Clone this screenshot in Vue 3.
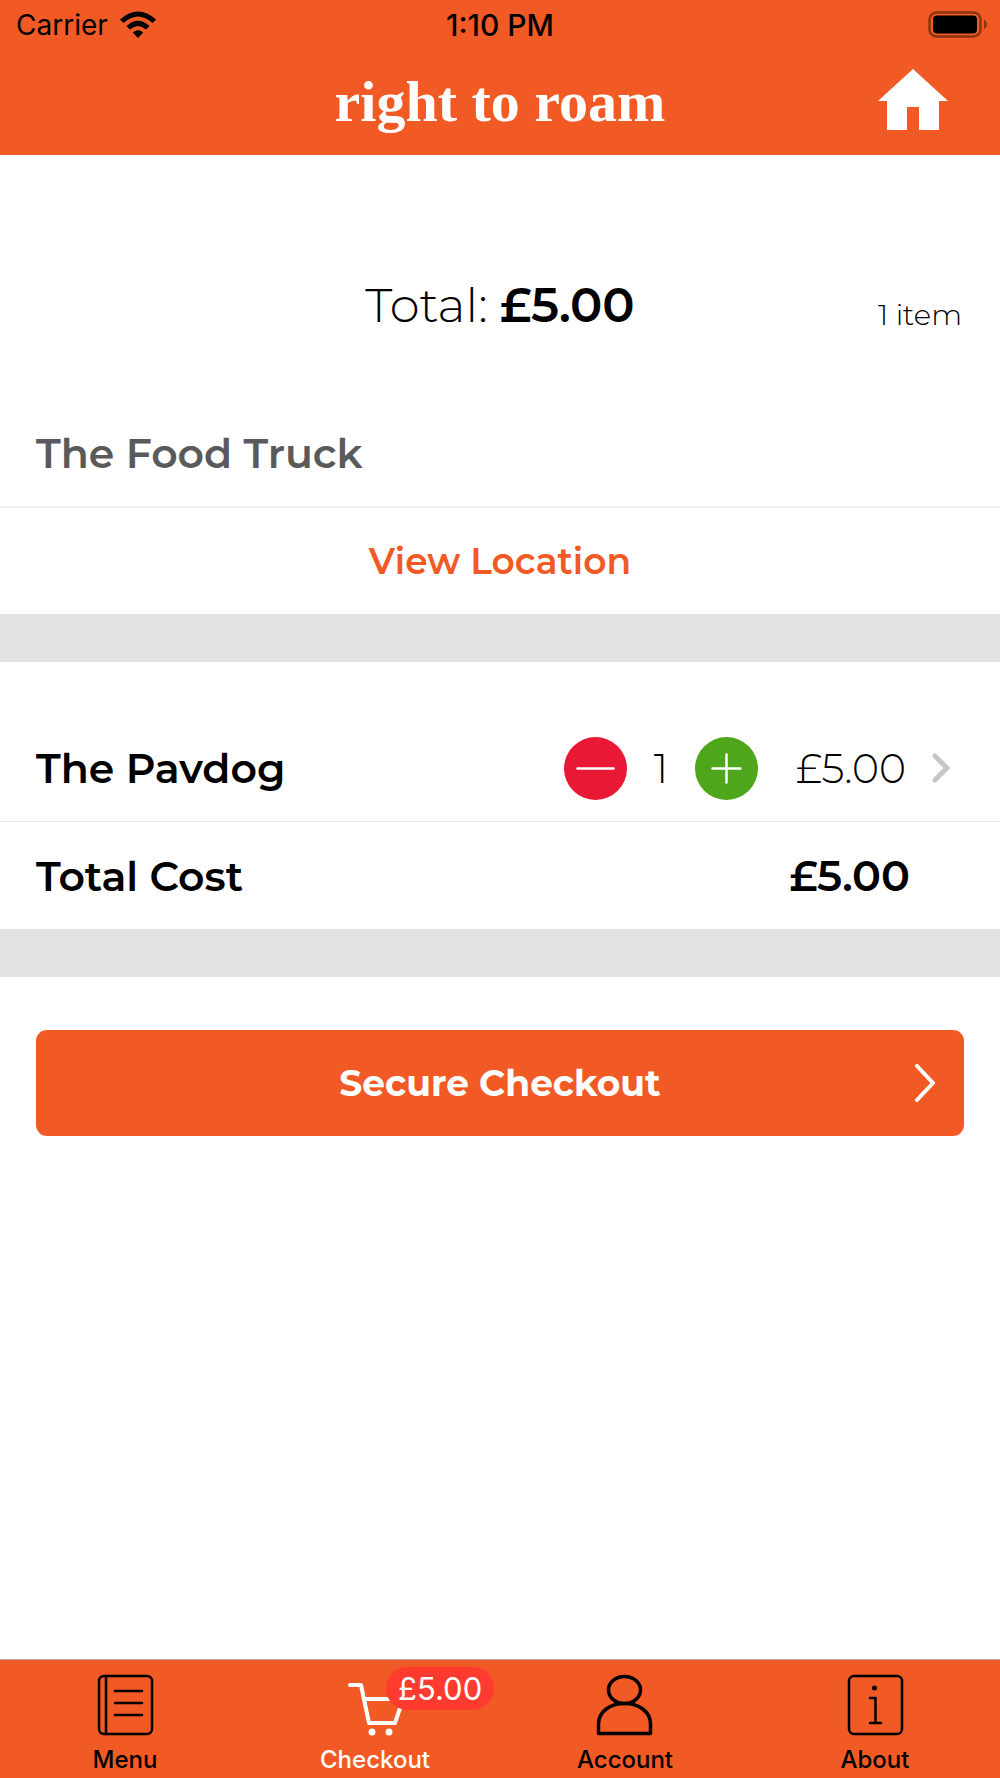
<script setup>
import { computed, ref } from 'vue'

const unitPrice = 5
const quantity = ref(1)
const total = computed(() => '£' + (unitPrice * quantity.value).toFixed(2))
const itemCount = computed(() => quantity.value + (quantity.value === 1 ? ' item' : ' items'))

function remove() {
  if (quantity.value > 0) quantity.value--
}
function add() {
  quantity.value++
}
</script>

<template>
  <div class="app">
    <header class="header">
      <div class="status">
        <div class="carrier">
          <span>Carrier</span>
          <svg class="wifi" viewBox="0 0 36 28" aria-hidden="true">
            <path d="M0 8.500Q18-7.500 36 8.500L32.500 12Q18-1 3.500 12Z" />
            <path d="M6.500 15Q18 4.500 29.500 15L26 18.500Q18 11.500 10 18.500Z" />
            <path d="M12.800 21.500Q18 17 23.200 21.500L18 27Z" />
          </svg>
        </div>
        <span class="clock">1:10 PM</span>
        <svg class="battery" viewBox="0 0 60 28" aria-hidden="true">
          <rect x="1.500" y="1.500" width="51" height="24" rx="7" fill="none" stroke="#8c3512" stroke-width="2.500" />
          <rect x="5" y="4.500" width="44" height="18" rx="4" />
          <path d="M56 8.500Q59 10.500 59 13.500T56 18.500Z" fill="#8c3512" />
        </svg>
      </div>
      <div class="brand">
        <h1>right to roam</h1>
        <a class="home" href="#home" aria-label="Home">
          <svg viewBox="0 0 70 61" aria-hidden="true">
            <path d="M35 0 70 32H61V61H41V38H29V61H9V32H0Z" fill="#fff" />
          </svg>
        </a>
      </div>
    </header>

    <main class="content">
      <section class="summary">
        <p class="total">Total: <strong>{{ total }}</strong></p>
        <p class="count">{{ itemCount }}</p>
      </section>

      <h2 class="vendor">The Food Truck</h2>
      <a class="location" href="#location">View Location</a>

      <section class="order">
        <div class="row item">
          <h3>The Pavdog</h3>
          <div class="stepper">
            <button class="round minus" type="button" aria-label="Remove one" @click="remove">
              <svg viewBox="0 0 63 63" aria-hidden="true"><path d="M13.500 31.500H49.500" /></svg>
            </button>
            <span class="quantity">{{ quantity }}</span>
            <button class="round plus" type="button" aria-label="Add one" @click="add">
              <svg viewBox="0 0 63 63" aria-hidden="true"><path d="M17.500 31.500H45.500M31.500 17.500V45.500" /></svg>
            </button>
          </div>
          <span class="price">{{ total }}</span>
          <a class="details" href="#item" aria-label="Edit The Pavdog">
            <svg viewBox="0 0 18 30" aria-hidden="true"><path d="M3 3 15 15 3 27" /></svg>
          </a>
        </div>
        <div class="row cost">
          <h3>Total Cost</h3>
          <strong class="price">{{ total }}</strong>
        </div>
      </section>

      <button class="checkout" type="button">
        <span>Secure Checkout</span>
        <svg viewBox="0 0 22 38" aria-hidden="true"><path d="M3 2 19 19 3 36" /></svg>
      </button>
    </main>

    <nav class="tabs">
      <a class="tab" href="#menu">
        <svg viewBox="0 0 60 62" aria-hidden="true">
          <rect x="4" y="2" width="53" height="58" rx="5" />
          <path d="M11 2V60M20 17H47M20 29H47M20 41H47" />
        </svg>
        <span>Menu</span>
      </a>
      <a class="tab active" href="#checkout" aria-current="page">
        <svg viewBox="0 0 60 62" aria-hidden="true">
          <path d="M5 11H16L24 49H50L58 25H19" />
          <circle class="solid" cx="27" cy="58" r="3.500" />
          <circle class="solid" cx="44" cy="58" r="3.500" />
        </svg>
        <span>Checkout</span>
        <span class="badge">{{ total }}</span>
      </a>
      <a class="tab person" href="#account">
        <svg viewBox="0 0 60 62" aria-hidden="true">
          <ellipse cx="29.500" cy="16" rx="16" ry="13.500" />
          <path d="M3.500 59.500V50C3.500 38 14.500 29.500 29.500 29.500S55.500 38 55.500 50V59.500Z" />
        </svg>
        <span>Account</span>
      </a>
      <a class="tab" href="#about">
        <svg viewBox="0 0 60 62" aria-hidden="true">
          <rect x="4" y="2" width="53" height="58" rx="5" />
          <path d="M25 24H30.500V49M25 49H36" />
          <circle class="solid" cx="29.500" cy="14" r="2.500" />
        </svg>
        <span>About</span>
      </a>
    </nav>
  </div>
</template>

<style>
body {
  margin: 0;
  background: #fff;
}
</style>

<style scoped>
.app {
  display: flex;
  flex-direction: column;
  min-height: 100vh;
  font-family: Montserrat, Inter, sans-serif;
  color: #000;
}
h1, h2, h3, p {
  margin: 0;
}
svg {
  display: block;
}
a {
  color: inherit;
  text-decoration: none;
}
button {
  border: 0;
  padding: 0;
  font: inherit;
  cursor: pointer;
}

/* Header */
.header {
  background: #f15a24;
  padding-bottom: 14px;
}
.status {
  display: grid;
  grid-template-columns: 1fr auto 1fr;
  align-items: center;
  height: 50px;
  padding: 0 12px;
  font-family: Inter, sans-serif;
  font-size: 28px;
}
.carrier {
  display: flex;
  align-items: center;
  gap: 12px;
  padding-left: 4px;
}
.wifi {
  width: 36px;
  height: 28px;
}
.clock {
  font-size: 30px;
  font-weight: 500;
}
.battery {
  width: 60px;
  height: 28px;
  justify-self: end;
}
.brand {
  display: grid;
  grid-template-columns: 1fr auto 1fr;
  align-items: center;
  height: 91px;
  padding: 0 52px;
}
.brand h1 {
  grid-column: 2;
  padding-top: 12px;
  font-family: "Liberation Serif", serif;
  font-size: 58px;
  font-weight: 700;
  color: #fff;
}
.home {
  justify-self: end;
  padding-top: 8px;
}
.home svg {
  width: 70px;
  height: 61px;
}

/* Content */
.content {
  flex: 1;
}
.summary {
  display: grid;
  grid-template-columns: 1fr auto 1fr;
  align-items: end;
  padding: 120px 38px 66px;
}
.total {
  grid-column: 2;
  font-size: 48px;
  line-height: 60px;
  font-weight: 300;
}
.total strong {
  font-weight: 600;
}
.count {
  justify-self: end;
  font-size: 29px;
  line-height: 40px;
  font-weight: 300;
}
.vendor {
  padding: 0 36px;
  border-bottom: 2px solid #f2f2f3;
  font-size: 41px;
  line-height: 105px;
  font-weight: 600;
  color: #5a5a5a;
}
.location {
  display: block;
  font-size: 36px;
  line-height: 106px;
  font-weight: 600;
  text-align: center;
  color: #f15a24;
}
.order {
  border: solid #e2e2e4;
  border-width: 48px 0;
}
.row {
  display: flex;
  align-items: center;
  height: 107px;
  padding: 0 36px;
}
.row h3 {
  flex: 1;
  font-size: 41px;
  font-weight: 600;
}
.row .price {
  font-size: 43px;
}
.row.item {
  height: 106px;
  padding: 53px 50px 0 36px;
  border-bottom: 1px solid #e4e4e5;
}
.stepper {
  display: flex;
  align-items: center;
}
.round {
  width: 63px;
  height: 63px;
  border-radius: 50%;
}
.round svg {
  fill: none;
  stroke: #fff;
  stroke-width: 2.500;
  stroke-linecap: round;
}
.minus {
  background: #e91834;
}
.plus {
  background: #4ea61a;
}
.quantity {
  width: 68px;
  font-size: 41px;
  font-weight: 300;
  text-align: center;
}
.row.item .price {
  width: 148px;
  font-size: 41px;
  font-weight: 300;
  text-align: right;
}
.details {
  margin-left: 26px;
}
.details svg {
  width: 18px;
  height: 30px;
  fill: none;
  stroke: #c6c6c8;
  stroke-width: 5;
  stroke-linecap: round;
}
.row.cost {
  padding-right: 90px;
}
.cost .price {
  font-weight: 600;
}
.checkout {
  display: grid;
  grid-template-columns: 1fr auto 1fr;
  align-items: center;
  width: calc(100% - 72px);
  height: 106px;
  margin: 53px 36px;
  padding: 0 28px;
  border-radius: 11px;
  background: #f15a24;
  color: #fff;
  font-size: 36px;
  font-weight: 700;
}
.checkout span {
  grid-column: 2;
}
.checkout svg {
  justify-self: end;
  width: 22px;
  height: 38px;
  fill: none;
  stroke: #fff;
  stroke-width: 4;
  stroke-linecap: round;
  stroke-linejoin: round;
}

/* Tab bar */
.tabs {
  display: grid;
  grid-template-columns: repeat(4, 1fr);
  height: 118px;
  border-top: 1px solid #b9a39a;
  background: #f15a24;
}
.tab {
  position: relative;
  display: flex;
  flex-direction: column;
  align-items: center;
  padding-top: 14px;
  font-family: Inter, sans-serif;
  font-size: 24px;
  line-height: 30px;
  font-weight: 500;
}
.tab svg {
  width: 60px;
  height: 62px;
  margin-bottom: 9px;
  fill: none;
  stroke: #000;
  stroke-width: 2.500;
  stroke-linecap: round;
  stroke-linejoin: round;
}
.tab .solid {
  fill: #000;
  stroke: none;
}
.person svg {
  stroke-width: 3.500;
}
.active {
  color: #fff;
}
.active svg {
  stroke: #fff;
  stroke-width: 4;
}
.active .solid {
  fill: #fff;
}
.badge {
  position: absolute;
  top: 7px;
  left: calc(50% + 11px);
  padding: 0 12px;
  border-radius: 22px;
  background: #ff3b30;
  font-size: 31px;
  line-height: 43px;
  font-weight: 400;
}
</style>
